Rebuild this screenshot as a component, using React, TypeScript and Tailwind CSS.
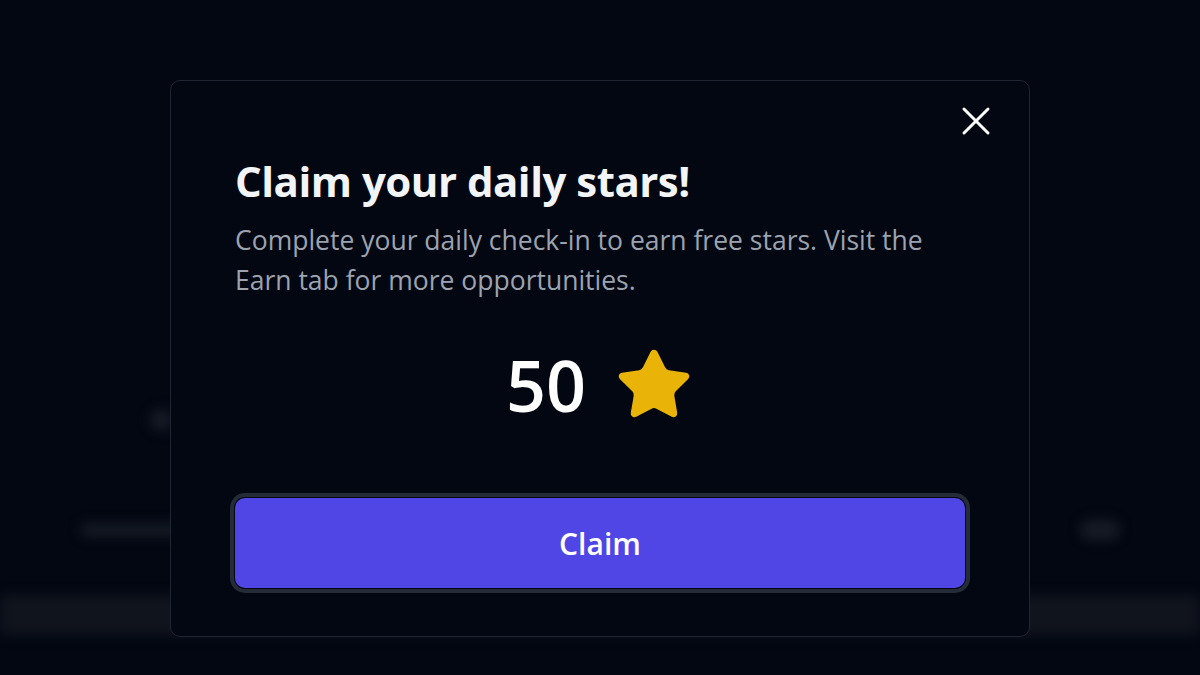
import { X } from 'lucide-react';

const FONT = { fontFamily: '"Open Sans", "Noto Sans", sans-serif' };

function StarIcon() {
  return (
    <svg className="h-[80px] w-[80px]" fill="#eab308" viewBox="0 0 24 24">
      <path
        d="M11.525 2.295a.53.53 0 0 1 .95 0l2.31 4.679a2.123 2.123 0 0 0 1.595 1.16l5.166.756a.53.53 0 0 1 .294.904l-3.736 3.638a2.123 2.123 0 0 0-.611 1.878l.882 5.14a.53.53 0 0 1-.771.56l-4.618-2.428a2.122 2.122 0 0 0-1.973 0L6.396 21.01a.53.53 0 0 1-.77-.56l.881-5.139a2.122 2.122 0 0 0-.611-1.879L2.16 9.795a.53.53 0 0 1 .294-.906l5.165-.755a2.122 2.122 0 0 0 1.597-1.16z"
        stroke="#eab308"
        strokeLinejoin="round"
        strokeWidth="1.2"
      />
    </svg>
  );
}

// the page behind the dialog, blurred out
function BlurredPage() {
  return (
    <div className="flex h-[675px] w-full flex-col blur-[6px]">
      <div className="h-[410px]" />
      <div className="flex h-[20px] items-center pl-[150px]">
        <div className="h-[22px] w-[22px] rounded-full bg-[#161b26]" />
      </div>
      <div className="h-[90px]" />
      <div className="flex h-[20px] items-center justify-between px-[80px]">
        <div className="h-[14px] w-[110px] rounded-full bg-[#141923]" />
        <div className="h-[20px] w-[40px] rounded-full bg-[#161b26]" />
      </div>
      <div className="h-[55px]" />
      <div className="h-[40px] w-full bg-[#10141d]" />
    </div>
  );
}

export default function App() {
  return (
    <div className="relative h-[675px] w-[1200px] overflow-hidden bg-[#030712]" style={FONT}>
      <BlurredPage />

      <div className="absolute inset-0 flex justify-center pt-[80px]">
        <div className="relative flex h-[557px] w-[860px] flex-col rounded-[10px] border border-[#1f2532] bg-[#030712] px-[64px] pt-[74px] pb-[48px]">
          <button className="absolute top-[16px] right-[29px] text-white" type="button">
            <X className="h-[48px] w-[48px]" strokeWidth={1.5} />
          </button>

          <h2 className="text-[42px] leading-[52px] font-bold tracking-[-0.5px] text-[#f3f4f6]">
            Claim your daily stars!
          </h2>
          <p className="mt-[13px] text-[26.5px] leading-[40px] text-[#9ca3af]">
            Complete your daily check-in to earn free stars. Visit the Earn tab for more opportunities.
          </p>

          <div className="mt-[45px] flex h-[80px] items-center justify-center gap-[28px]">
            <span className="text-[70px] leading-[80px] font-semibold text-white">50</span>
            <StarIcon />
          </div>

          <button
            className="mt-[73px] h-[90px] w-full rounded-[10px] bg-[#4f46e5] text-[30px] font-semibold text-white ring-4 ring-[#252b37] ring-offset-1 ring-offset-[#030712]"
            type="button"
          >
            Claim
          </button>
        </div>
      </div>
    </div>
  );
}
